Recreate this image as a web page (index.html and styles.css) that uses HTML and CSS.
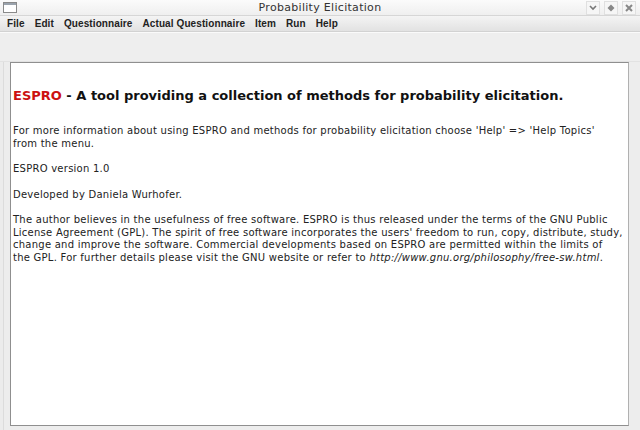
FILE: index.html
```html
<!DOCTYPE html>
<html lang="en">
<head>
  <meta charset="UTF-8">
  <title>Probability Elicitation</title>
  <link rel="stylesheet" href="styles.css">
</head>
<body>
  <div class="window">
    <!-- Title bar -->
    <div class="titlebar">
      <svg class="app-icon" width="14" height="11" viewBox="0 0 14 11">
        <rect x="0.5" y="0.5" width="13" height="10" fill="#fff" stroke="#8a8a8a"/>
        <rect x="1" y="1" width="12" height="2" fill="#9aa3ad"/>
      </svg>
      <span class="title">Probability Elicitation</span>
      <div class="win-buttons">
        <span class="win-btn">
          <svg width="8" height="8" viewBox="0 0 8 8"><path d="M1 2 L4 5 L7 2" fill="none" stroke="#777" stroke-width="1.6"/></svg>
        </span>
        <span class="win-btn">
          <svg width="8" height="8" viewBox="0 0 8 8"><path d="M4 0.5 L7.5 4 L4 7.5 L0.5 4 Z" fill="#888"/></svg>
        </span>
        <span class="win-btn">
          <svg width="8" height="8" viewBox="0 0 8 8"><path d="M1 1 L7 7 M7 1 L1 7" stroke="#888" stroke-width="2"/></svg>
        </span>
      </div>
    </div>

    <!-- Menu bar -->
    <div class="menubar">
      <span class="menu">File</span>
      <span class="menu">Edit</span>
      <span class="menu">Questionnaire</span>
      <span class="menu">Actual Questionnaire</span>
      <span class="menu">Item</span>
      <span class="menu">Run</span>
      <span class="menu">Help</span>
    </div>

    <div class="toolbar"></div>

    <!-- Welcome panel -->
    <div class="main">
      <div class="panel">
        <h1><span class="brand">ESPRO</span> - A tool providing a collection of methods for probability elicitation.</h1>
        <p>For more information about using ESPRO and methods for probability elicitation choose 'Help' =&gt; 'Help Topics'<br>from the menu.</p>
        <p>ESPRO version 1.0</p>
        <p>Developed by Daniela Wurhofer.</p>
        <p>The author believes in the usefulness of free software. ESPRO is thus released under the terms of the GNU Public License Agreement (GPL). The spirit of free software incorporates the users' freedom to run, copy, distribute, study, change and improve the software. Commercial developments based on ESPRO are permitted within the limits of<br>the GPL. For further details please visit the GNU website or refer to <em>http://www.gnu.org/philosophy/free-sw.html</em>.</p>
      </div>
    </div>
  </div>
</body>
</html>
```

FILE: styles.css
```css
/* Window frame */
body {
  margin: 0;
  font-family: "DejaVu Sans", sans-serif;
  background: #ececec;
}

.window {
  width: 640px;
  height: 430px;
  display: flex;
  flex-direction: column;
  background: #ededed;
}

.titlebar {
  height: 15px;
  display: flex;
  align-items: center;
  position: relative;
  background: linear-gradient(#fbfbfb, #efefef);
  border-bottom: 1px solid #d6d6d6;
}

.app-icon {
  margin-left: 3px;
}

.title {
  position: absolute;
  left: 0;
  right: 0;
  text-align: center;
  font-size: 11px;
  letter-spacing: 0.3px;
  color: #333;
}

.win-buttons {
  margin-left: auto;
  display: flex;
  gap: 4px;
  margin-right: 4px;
}

.win-btn {
  width: 12px;
  height: 12px;
  display: flex;
  align-items: center;
  justify-content: center;
  border: 1px solid #e0e0e0;
  background: #f6f6f6;
}

.menubar {
  height: 15px;
  display: flex;
  align-items: center;
  padding-left: 7px;
  background: linear-gradient(#f4f4f4, #e2e2e2);
  border-bottom: 1px solid #d2d2d2;
}

.menu {
  font-family: "Liberation Sans", Arial, sans-serif;
  font-size: 10px;
  font-weight: bold;
  letter-spacing: 0.1px;
  color: #222;
  margin-right: 10px;
}

.toolbar {
  height: 28px;
  border-top: 1px solid #fafafa;
  border-bottom: 1px solid #e2e2e2;
  background: #eeeeee;
}

.main {
  flex: 1;
  padding: 0 11px 4px 10px;
  box-shadow: inset 3px 0 0 #ececec, inset 4px 0 0 #dcdcdc;
}

.panel {
  height: 100%;
  box-sizing: border-box;
  background: #fff;
  border: 1px solid #8f8f8f;
  border-right-color: #b0b0b0;
  padding: 25px 0 0 2px;
  font-size: 10px;
  letter-spacing: 0.25px;
  color: #222;
  line-height: 12.5px;
}

h1 {
  font-size: 13px;
  font-weight: bold;
  letter-spacing: 0;
  color: #111;
  margin: 0 0 21px;
  line-height: 16px;
}

.brand {
  color: #cc1111;
}

p {
  margin: 0 0 13px;
}

em {
  font-style: oblique;
}
```
